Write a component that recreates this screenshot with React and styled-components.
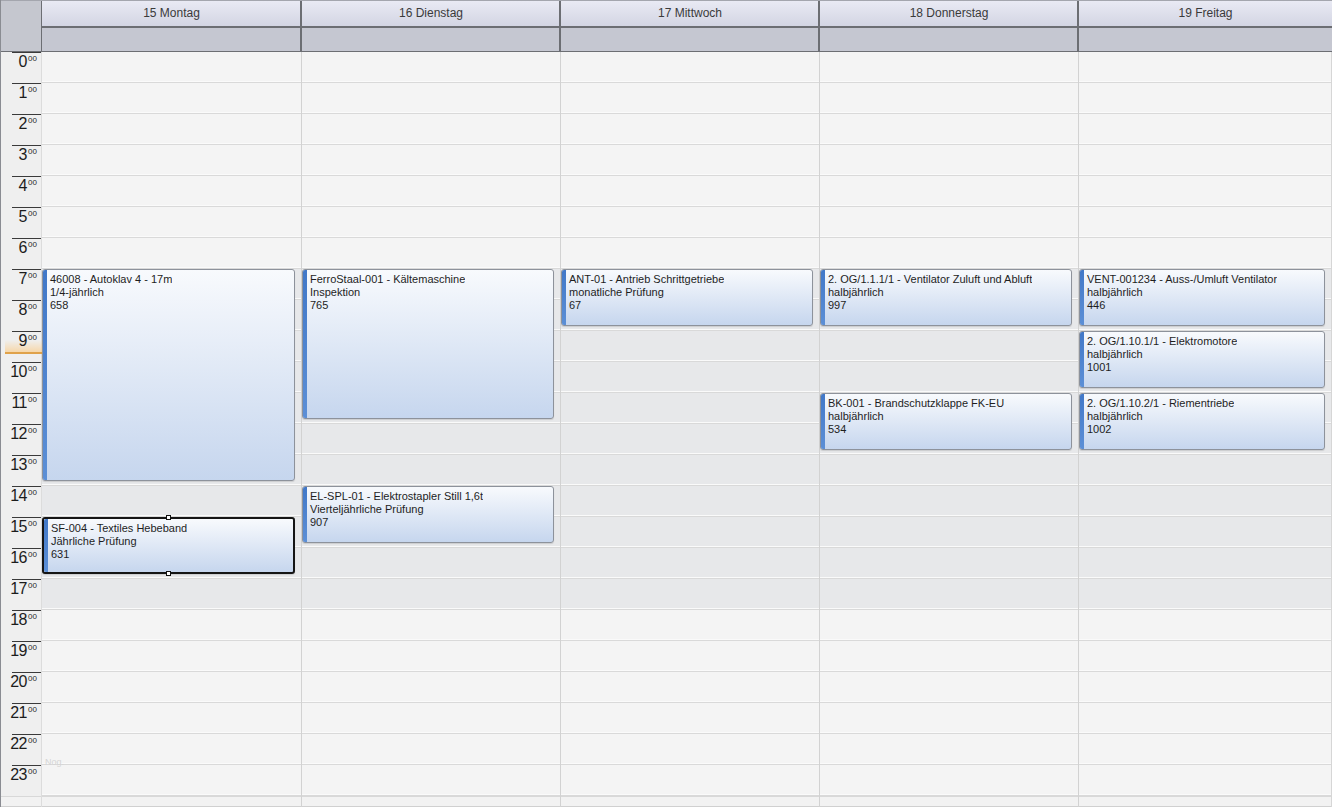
import React from "react";
import styled, { createGlobalStyle, css } from "styled-components";

const HOUR = 31;
const GUTTER = 41;
const COLS = `${GUTTER}px repeat(4, 259px) 1fr`;

const Global = createGlobalStyle`
  html, body { margin: 0; padding: 0; background: #f4f4f4; overflow: hidden; }
  * { box-sizing: border-box; }
`;

const Frame = styled.div`
  width: 1332px;
  height: 807px;
  display: flex;
  flex-direction: column;
  font-family: "Liberation Sans", Arial, sans-serif;
  border-left: 1px solid #8a8c92;
  overflow: hidden;
`;

const Header = styled.div`
  display: grid;
  grid-template-columns: ${COLS};
  grid-template-rows: 27px 24px;
  border-top: 1px solid #a4a6ae;
  flex: none;
`;

const Corner = styled.div`
  grid-row: 1 / span 2;
  grid-column: 1;
  background: #c5c7cf;
  border-right: 1px solid #6c6e73;
  border-bottom: 1px solid #6c6e73;
`;

const DayTitle = styled.div`
  grid-row: 1;
  display: flex;
  align-items: center;
  justify-content: center;
  font-size: 12px;
  color: #3a3a3a;
  background: linear-gradient(#e9eaf4, #d3d5e3);
  border-bottom: 2px solid #6c6e73;
  border-left: ${(p) => (p.$first ? "none" : "2px solid #6c6e73")};
  margin-left: ${(p) => (p.$first ? "0" : "-1px")};
  padding-bottom: 1px;
`;

const DaySub = styled.div`
  grid-row: 2;
  background: #c5c7d1;
  border-bottom: 1px solid #6c6e73;
  border-left: ${(p) => (p.$first ? "none" : "2px solid #6c6e73")};
  margin-left: ${(p) => (p.$first ? "0" : "-1px")};
`;

const Body = styled.div`
  display: grid;
  grid-template-columns: ${COLS};
  flex: 1;
`;

const Gutter = styled.div`
  display: flex;
  flex-direction: column;
  background: #efefef;
  border-right: 1px solid #dcdcdc;
`;

const TimeLabel = styled.div`
  height: ${HOUR}px;
  flex: none;
  position: relative;
  display: flex;
  justify-content: flex-end;
  align-items: flex-start;
  padding: 1px 3px 0 0;
  color: #1c1c1c;
  ${(p) =>
    p.$current &&
    css`
      &::after {
        content: "";
        position: absolute;
        left: 4px;
        right: -1px;
        top: 9px;
        height: 12px;
        background: linear-gradient(rgba(255, 220, 160, 0), rgba(250, 205, 140, 0.7));
        border-bottom: 2px solid #e0a24a;
      }
    `}
`;

const TickLine = styled.span`
  position: absolute;
  top: 0;
  left: 11px;
  right: 0;
  height: 1px;
  background: #3a3a3a;
`;

const Digits = styled.span`
  position: relative;
  z-index: 1;
  font-size: 16px;
  line-height: 17px;
  letter-spacing: -0.5px;
`;

const Minutes = styled.span`
  position: relative;
  z-index: 1;
  font-size: 8px;
  line-height: 9px;
  color: #2a2a2a;
  margin-left: 1px;
  margin-top: 1px;
  width: 10px;
`;

const Filler = styled.div`
  flex: 1;
  border-top: 1px solid #d8d8d8;
  border-bottom: 1px solid #d0d0d0;
  background: #f2f2f2;
`;

const DayColumn = styled.div`
  position: relative;
  display: flex;
  flex-direction: column;
  border-left: ${(p) => (p.$first ? "none" : "1px solid #d2d2d2")};
  border-right: ${(p) => (p.$last ? "1px solid #d6d6d6" : "none")};
  box-shadow: ${(p) => (p.$first ? "none" : "inset 1px 0 0 #ececec")};
`;

const HourSlot = styled.div`
  height: ${HOUR}px;
  flex: none;
  background: ${(p) => (p.$work ? "#e7e8ea" : "#f4f4f4")};
  border-bottom: 1px solid #d9d9d9;
  box-shadow: inset 0 -1px 0 #fafafa;
`;

const Event = styled.div`
  position: absolute;
  left: 0;
  right: 6px;
  display: flex;
  border-radius: 3px;
  border: 1px solid #8d929b;
  background: linear-gradient(#f8fafd, #c6d6ee);
  box-shadow: 0 1px 1px rgba(0, 0, 0, 0.12);
  color: #1e1e1e;
  font-size: 11px;
  line-height: 13px;
  ${(p) =>
    p.$selected &&
    css`
      border: 2px solid #151515;
    `}
`;

const Bar = styled.div`
  width: 4px;
  flex: none;
  background: linear-gradient(#4178c8, #5c8fd6);
  border-radius: 2px 0 0 2px;
`;

const EventText = styled.div`
  padding: 3px 0 0 3px;
  white-space: nowrap;
  overflow: hidden;
`;

const Handle = styled.span`
  position: absolute;
  left: 50%;
  width: 5px;
  height: 5px;
  margin-left: -3px;
  background: #fff;
  border: 1px solid #111;
  ${(p) => (p.$top ? "top: -4px;" : "bottom: -4px;")}
`;

const Ghost = styled.span`
  position: absolute;
  left: 3px;
  top: 705px;
  font-size: 9px;
  color: #d4d4d4;
`;

const days = ["15 Montag", "16 Dienstag", "17 Mittwoch", "18 Donnerstag", "19 Freitag"];

const events = [
  { day: 0, start: 7, end: 14, lines: ["46008 - Autoklav 4 - 17m", "1/4-jährlich", "658"] },
  { day: 0, start: 15, end: 17, lines: ["SF-004 - Textiles Hebeband", "Jährliche Prüfung", "631"], selected: true },
  { day: 1, start: 7, end: 12, lines: ["FerroStaal-001 - Kältemaschine", "Inspektion", "765"] },
  { day: 1, start: 14, end: 16, lines: ["EL-SPL-01 - Elektrostapler Still 1,6t", "Vierteljährliche Prüfung", "907"] },
  { day: 2, start: 7, end: 9, lines: ["ANT-01 - Antrieb Schrittgetriebe", "monatliche Prüfung", "67"] },
  { day: 3, start: 7, end: 9, lines: ["2. OG/1.1.1/1 - Ventilator Zuluft und Abluft", "halbjährlich", "997"] },
  { day: 3, start: 11, end: 13, lines: ["BK-001 - Brandschutzklappe FK-EU", "halbjährlich", "534"] },
  { day: 4, start: 7, end: 9, lines: ["VENT-001234 - Auss-/Umluft Ventilator", "halbjährlich", "446"] },
  { day: 4, start: 9, end: 11, lines: ["2. OG/1.10.1/1 - Elektromotore", "halbjährlich", "1001"] },
  { day: 4, start: 11, end: 13, lines: ["2. OG/1.10.2/1 - Riementriebe", "halbjährlich", "1002"] },
];

const hours = Array.from({ length: 24 }, (_, i) => i);

export default function App() {
  return (
    <>
      <Global />
      <Frame>
        <Header>
          <Corner />
          {days.map((d, i) => (
            <DayTitle key={d} $first={i === 0}>{d}</DayTitle>
          ))}
          {days.map((d, i) => (
            <DaySub key={d + "s"} $first={i === 0} />
          ))}
        </Header>
        <Body>
          <Gutter>
            {hours.map((h) => (
              <TimeLabel key={h} $current={h === 9}>
                <TickLine />
                <Digits>{h}</Digits>
                <Minutes>00</Minutes>
              </TimeLabel>
            ))}
            <Filler />
          </Gutter>
          {days.map((d, di) => (
            <DayColumn key={d} $first={di === 0} $last={di === days.length - 1}>
              {hours.map((h) => (
                <HourSlot key={h} $work={h >= 7 && h < 18} />
              ))}
              <Filler />
              {di === 0 && <Ghost>Nog.</Ghost>}
              {events
                .filter((e) => e.day === di)
                .map((e) => (
                  <Event
                    key={e.lines[0]}
                    $selected={e.selected}
                    style={{ top: e.start * HOUR, height: (e.end - e.start) * HOUR - 5 }}
                  >
                    <Bar />
                    <EventText>
                      {e.lines.map((l) => (
                        <div key={l}>{l}</div>
                      ))}
                    </EventText>
                    {e.selected && (
                      <>
                        <Handle $top />
                        <Handle />
                      </>
                    )}
                  </Event>
                ))}
            </DayColumn>
          ))}
        </Body>
      </Frame>
    </>
  );
}
